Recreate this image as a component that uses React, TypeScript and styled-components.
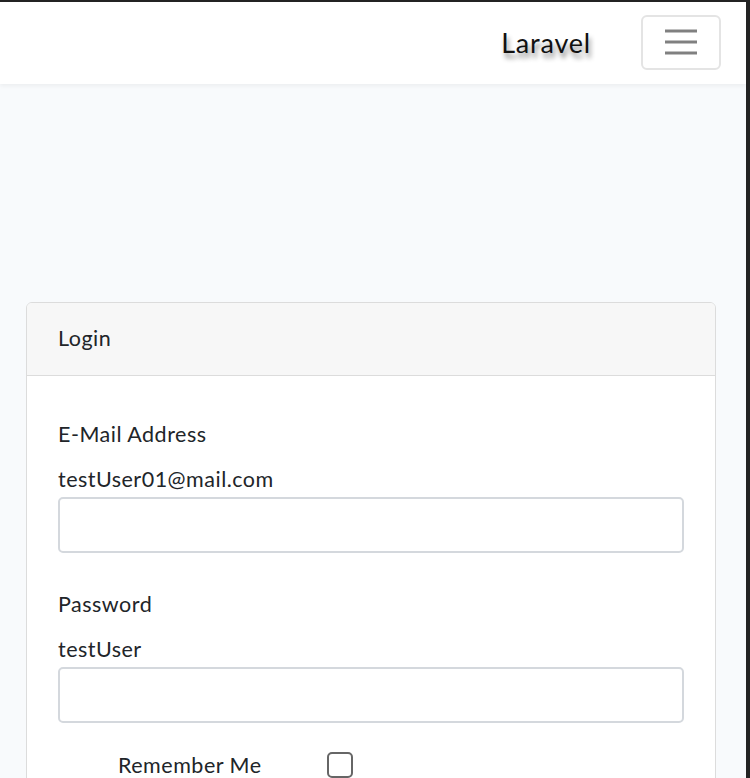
import React from "react";
import styled, { createGlobalStyle } from "styled-components";

const Global = createGlobalStyle`
  html, body { margin: 0; padding: 0; }
  body {
    font-family: Lato, "Noto Sans", sans-serif;
    color: #212529;
    background: #232323;
  }
  * { box-sizing: border-box; }
`;

const Frame = styled.div`
  min-height: 100vh;
  border-top: 2px solid #232323;
  border-right: 4px solid #232323;
  background: #f8fafc;
  overflow: hidden;
`;

const NavBar = styled.nav`
  height: 82px;
  background: #fff;
  box-shadow: 0 2px 4px rgba(0, 0, 0, 0.05);
  display: flex;
  align-items: center;
  justify-content: flex-end;
  padding-right: 25px;
  padding-bottom: 2px;
  position: relative;
`;

const Brand = styled.a`
  font-size: 27px;
  letter-spacing: 0.8px;
  color: #111;
  text-shadow: 2px 5px 5px rgba(0, 0, 0, 0.45);
  margin-right: 50px;
  text-decoration: none;
  line-height: 1;
`;

const Toggler = styled.button`
  width: 80px;
  height: 55px;
  border: 2px solid #e4e4e4;
  border-radius: 6px;
  background: transparent;
  display: flex;
  align-items: center;
  justify-content: center;
  padding: 0;
`;

const Main = styled.main`
  padding: 218px 30px 0 26px;
`;

const Card = styled.div`
  background: #fff;
  border: 1px solid #dcdcdc;
  border-radius: 6px;
  overflow: hidden;
`;

const CardHeader = styled.div`
  height: 73px;
  background: #f7f7f7;
  border-bottom: 1px solid #dcdcdc;
  display: flex;
  align-items: center;
  padding: 0 31px 2px;
  font-size: 21.5px;
  letter-spacing: 0.5px;
`;

const CardBody = styled.div`
  padding: 32px 31px 0;
  font-size: 21.5px;
  letter-spacing: 0.5px;
`;

const Group = styled.div<{ $gap?: number }>`
  margin-bottom: ${(p) => p.$gap ?? 25}px;
`;

const Label = styled.label`
  display: block;
  line-height: 34px;
  padding: 9px 0 10px;
`;

const Value = styled.div`
  line-height: 34px;
  padding-top: 1px;
`;

const Input = styled.div`
  height: 56px;
  margin-top: 1px;
  border: 2px solid #d4d8dd;
  border-radius: 5px;
  background: #fff;
`;

const CheckRow = styled.div`
  display: flex;
  align-items: flex-start;
  padding-left: 60px;
  padding-bottom: 40px;
`;

const CheckLabel = styled.span`
  line-height: 34px;
  width: 209px;
`;

const CheckBox = styled.span`
  margin-top: 4px;
  width: 26px;
  height: 26px;
  border: 2px solid #666;
  border-radius: 5px;
  background: #fff;
`;

export default function App() {
  return (
    <>
      <Global />
      <Frame>
        <NavBar>
          <Brand href="#">Laravel</Brand>
          <Toggler aria-label="Toggle navigation">
            <svg width="34" height="26" viewBox="0 0 34 26">
              <g stroke="#808080" strokeWidth="3">
                <line x1="1" y1="2" x2="33" y2="2" />
                <line x1="1" y1="13" x2="33" y2="13" />
                <line x1="1" y1="24" x2="33" y2="24" />
              </g>
            </svg>
          </Toggler>
        </NavBar>
        <Main>
          <Card>
            <CardHeader>Login</CardHeader>
            <CardBody>
              <Group>
                <Label>E-Mail Address</Label>
                <Value>testUser01@mail.com</Value>
                <Input />
              </Group>
              <Group>
                <Label>Password</Label>
                <Value>testUser</Value>
                <Input />
              </Group>
              <CheckRow>
                <CheckLabel>Remember Me</CheckLabel>
                <CheckBox />
              </CheckRow>
            </CardBody>
          </Card>
        </Main>
      </Frame>
    </>
  );
}
